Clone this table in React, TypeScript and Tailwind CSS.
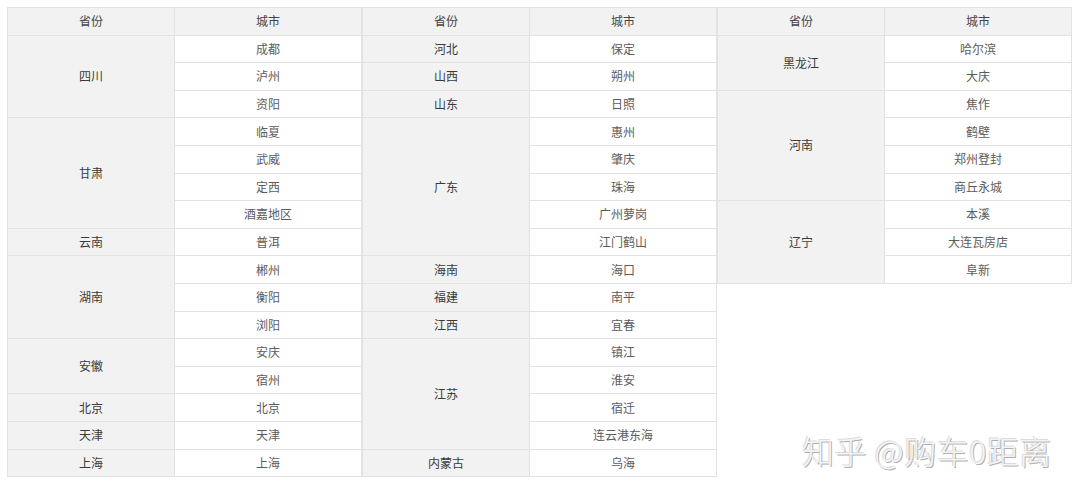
type Group = { province: string; cities: string[] };

const tables: Group[][] = [
  [
    { province: '四川', cities: ['成都', '泸州', '资阳'] },
    { province: '甘肃', cities: ['临夏', '武威', '定西', '酒嘉地区'] },
    { province: '云南', cities: ['普洱'] },
    { province: '湖南', cities: ['郴州', '衡阳', '浏阳'] },
    { province: '安徽', cities: ['安庆', '宿州'] },
    { province: '北京', cities: ['北京'] },
    { province: '天津', cities: ['天津'] },
    { province: '上海', cities: ['上海'] },
  ],
  [
    { province: '河北', cities: ['保定'] },
    { province: '山西', cities: ['朔州'] },
    { province: '山东', cities: ['日照'] },
    { province: '广东', cities: ['惠州', '肇庆', '珠海', '广州萝岗', '江门鹤山'] },
    { province: '海南', cities: ['海口'] },
    { province: '福建', cities: ['南平'] },
    { province: '江西', cities: ['宜春'] },
    { province: '江苏', cities: ['镇江', '淮安', '宿迁', '连云港东海'] },
    { province: '内蒙古', cities: ['乌海'] },
  ],
  [
    { province: '黑龙江', cities: ['哈尔滨', '大庆'] },
    { province: '河南', cities: ['焦作', '鹤壁', '郑州登封', '商丘永城'] },
    { province: '辽宁', cities: ['本溪', '大连瓦房店', '阜新'] },
  ],
];

function RegionTable({ groups }: { groups: Group[] }) {
  let row = 2;
  return (
    <div className="grid w-[355px] grid-cols-[166px_1fr] auto-rows-[26.6px] gap-px self-start border border-[#e2e2e2] bg-[#e2e2e2]">
      <div className="flex items-center justify-center bg-[#f2f2f2] text-[#444]">省份</div>
      <div className="flex items-center justify-center bg-[#f2f2f2] text-[#444]">城市</div>
      {groups.map((g) => {
        const start = row;
        row += g.cities.length;
        return [
          <div
            key={g.province}
            className="col-start-1 flex items-center justify-center bg-[#f2f2f2] text-[#3a3a3a]"
            style={{ gridRow: `${start} / span ${g.cities.length}` }}
          >
            {g.province}
          </div>,
          ...g.cities.map((c, i) => (
            <div
              key={g.province + c}
              className="col-start-2 flex items-center justify-center bg-white text-[#5c5c5c]"
              style={{ gridRow: `${start + i}` }}
            >
              {c}
            </div>
          )),
        ];
      })}
    </div>
  );
}

export default function App() {
  return (
    <div
      className="relative h-[499px] w-[1080px] overflow-hidden bg-white text-[12px]"
      style={{ fontFamily: '"Noto Sans CJK SC", "Noto Sans", sans-serif' }}
    >
      <div className="flex pl-[7px] pt-[7px]">
        {tables.map((t, i) => (
          <RegionTable key={i} groups={t} />
        ))}
      </div>

      {/* watermark */}
      <div className="absolute left-[802px] top-[434px] text-[32px] font-light leading-none tracking-[0.5px] text-[#f4f4f4] [text-shadow:1px_1px_0_#b0b0b0,-1px_-1px_0_#dcdcdc]">
        知乎 @购车0距离
      </div>
    </div>
  );
}
